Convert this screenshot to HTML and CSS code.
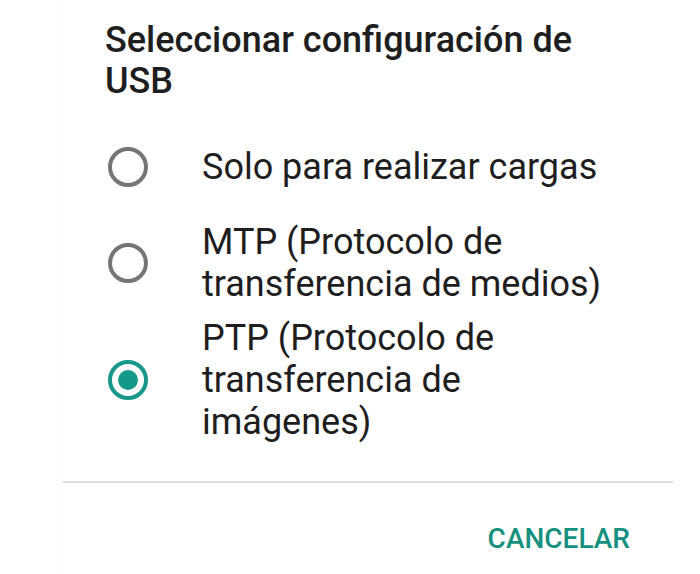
FILE: index.html
```html
<html lang="es">
<head>
  <meta charset="UTF-8">
  <meta name="viewport" content="width=device-width, initial-scale=1.0">
  <title>Configuración de USB</title>
  <link rel="stylesheet" href="styles.css">
</head>

<body>
  <div class="dialog">
    <h1 class="dialog-title">Seleccionar configuración de USB</h1>

    <ul class="choice-list">
      <li class="choice">
        <span class="radio"></span>
        <span class="choice-label">Solo para realizar cargas</span>
      </li>
      <li class="choice">
        <span class="radio"></span>
        <span class="choice-label">MTP (Protocolo de transferencia de medios)</span>
      </li>
      <li class="choice">
        <span class="radio checked"></span>
        <span class="choice-label">PTP (Protocolo de transferencia de imágenes)</span>
      </li>
    </ul>

    <div class="divider"></div>

    <div class="dialog-actions">
      <button class="text-btn">CANCELAR</button>
    </div>
  </div>
</body>
</html>
```

FILE: styles.css
```css
body {
  margin: 0;
  padding: 0;
  background-color: #fff;
  font-family: Roboto, "Noto Sans", sans-serif;
  color: #1e1e1e;
}

.dialog {
  margin-left: 62px;
  width: 611px;
  min-height: 574px;
  border-left: 1px solid #f8f8f8;
  box-sizing: border-box;
}

.dialog-title {
  margin: 0;
  padding: 20px 0 0 42px;
  max-width: 500px;
  font-size: 36px;
  line-height: 41px;
  font-weight: 500;
  color: #1e1e1e;
}

.choice-list {
  list-style: none;
  margin: 17px 0 0;
  padding: 0 0 0 45px;
}

.choice {
  display: flex;
  align-items: center;
  gap: 54px;
  min-height: 96px;
  padding: 6px 0;
  box-sizing: border-box;
}

.radio {
  flex: none;
  width: 40px;
  height: 40px;
  border: 4px solid #757575;
  border-radius: 50%;
  box-sizing: border-box;
  position: relative;
}

.radio.checked {
  border-color: #15978a;
}

/* dot inside the selected radio */
.radio.checked::after {
  content: "";
  position: absolute;
  top: 6px;
  left: 6px;
  width: 20px;
  height: 20px;
  border-radius: 50%;
  background-color: #15978a;
}

.choice-label {
  width: 420px;
  font-size: 36px;
  line-height: 42px;
}

.divider {
  margin-top: 32px;
  height: 2px;
  background-color: #dedede;
}

.dialog-actions {
  padding: 38px 43px 0 0;
  text-align: right;
}

.text-btn {
  border: none;
  background: none;
  padding: 0;
  font-family: Roboto, "Noto Sans", sans-serif;
  font-size: 28px;
  line-height: 36px;
  font-weight: 500;
  color: #16907f;
  cursor: pointer;
}
```
